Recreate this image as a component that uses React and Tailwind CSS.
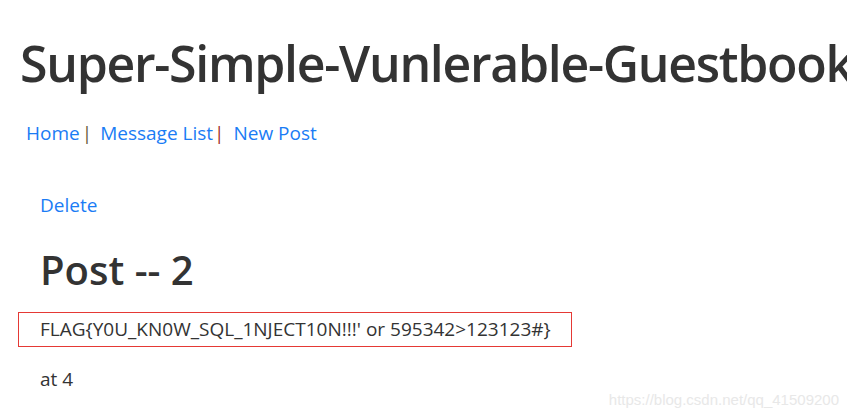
export default function App() {
  return (
    <div className="w-[847px] h-[419px] overflow-hidden bg-white text-[#333] relative" style={{ fontFamily: '"Open Sans", "Noto Sans", sans-serif' }}>
      <div className="pl-[20px] pt-[33px]">
        <h1 className="text-[50px] leading-[60px] font-semibold whitespace-nowrap tracking-[-1.3px]">Super-Simple-Vunlerable-Guestbook</h1>
        <div className="mt-[26px] pl-[6px] text-[19px] leading-[28px] flex items-center whitespace-nowrap">
          <a className="text-[#1a7cf5]">Home</a>
          <span className="text-[#6b5a3a] ml-[2px]">|</span>
          <a className="text-[#1a7cf5] ml-[8px]">Message List</a>
          <span className="text-[#a03028] ml-[1px]">|</span>
          <a className="text-[#1a7cf5] ml-[9px]">New Post</a>
        </div>
      </div>
      <div className="pl-[40px] mt-[44px] text-[19px]">
        <a className="text-[#1a7cf5] leading-[28px] block">Delete</a>
        <h2 className="text-[40px] leading-[48px] font-semibold mt-[27px]">Post -- 2</h2>
      </div>
      <div className="ml-[18px] mt-[18px] w-[554px] h-[35px] border border-[#e53935] flex items-center pl-[21px] text-[19px] whitespace-nowrap">
        FLAG{"{"}Y0U_KN0W_SQL_1NJECT10N!!!' or 595342&gt;123123#{"}"}
      </div>
      <div className="pl-[40px] mt-[18px] text-[19px] leading-[28px]">at 4</div>
      <div className="absolute right-[8px] bottom-[8px] text-[15px] text-[#e8e8e8]" style={{ fontFamily: '"Liberation Sans", sans-serif' }}>https://blog.csdn.net/qq_41509200</div>
    </div>
  );
}
